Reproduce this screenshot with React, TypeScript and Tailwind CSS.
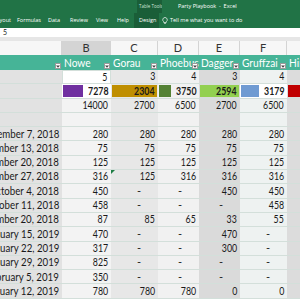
import React from "react";

const colW = ["w-[62px]", "w-[49px]", "w-[47px]", "w-[41px]", "w-[41px]", "w-[47px]", "w-[40px]"];
const colBg = ["bg-[#e2e2e2]", "bg-[#f3f3f3]", "bg-[#e7e7e7]", "bg-[#f1f1f1]", "bg-[#dadada]", "bg-[#eef2f1]", "bg-[#dcdcdc]"];

function N({ children, bold = false, wide = false }: { children: React.ReactNode; bold?: boolean; wide?: boolean }) {
  return (
    <span
      className={
        "inline-block origin-right whitespace-nowrap " + (wide ? "scale-x-[0.88] " : "scale-x-[0.8] ") + (bold ? "font-bold" : "")
      }
    >
      {children}
    </span>
  );
}

function Cell({ i, children, extra = "" }: { i: number; children?: React.ReactNode; extra?: string }) {
  return (
    <div
      className={
        colW[i] +
        " " +
        colBg[i] +
        " shrink-0 h-full flex items-center justify-end overflow-hidden pr-[3px] border-b border-[#d3dfda] " +
        extra
      }
    >
      {children}
    </div>
  );
}

const dates = [
  "September 7, 2018",
  "September 13, 2018",
  "September 20, 2018",
  "September 27, 2018",
  "October 4, 2018",
  "October 11, 2018",
  "November 20, 2018",
  "January 15, 2019",
  "January 22, 2019",
  "January 29, 2019",
  "February 5, 2019",
  "February 12, 2019",
];

const data: string[][] = [
  ["280", "280", "280", "280", "280"],
  ["75", "75", "75", "75", "75"],
  ["125", "125", "125", "125", "125"],
  ["316", "125", "316", "316", "316"],
  ["450", "-", "-", "450", "450"],
  ["458", "-", "-", "-", "458"],
  ["87", "85", "65", "33", "55"],
  ["470", "-", "-", "470", "-"],
  ["317", "-", "-", "300", "-"],
  ["825", "-", "-", "-", "-"],
  ["350", "-", "-", "-", "-"],
  ["780", "780", "780", "0", "0"],
];

function Val({ v }: { v: string }) {
  if (v === "-") return <span className="pr-[14px]">-</span>;
  return <N>{v}</N>;
}

function Row({ children }: { children: React.ReactNode }) {
  return <div className="h-[14.3px] flex shrink-0">{children}</div>;
}

function FilterBtn() {
  return (
    <div className="absolute right-[1px] bottom-[1px] w-[6px] h-[6px] bg-white border border-[#9a9a9a] flex items-center justify-center">
      <svg width="4" height="3" viewBox="0 0 4 3">
        <path d="M0 0.5 L4 0.5 L2 2.8 Z" fill="#444" />
      </svg>
    </div>
  );
}

function HeadCell({ i, label }: { i: number; label: string }) {
  return (
    <div className={colW[i] + " shrink-0 h-full flex items-center overflow-hidden pl-[2px] relative"}>
      <span className="inline-block origin-left scale-x-[0.85] whitespace-nowrap text-[12px] leading-none">{label}</span>
      {i < 6 && <FilterBtn />}
    </div>
  );
}

export default function App() {
  return (
    <div className="w-[300px] h-[300px] overflow-hidden bg-white flex flex-col font-[Lato,sans-serif] text-[11px] text-[#1a1a1a]">
      {/* Ribbon */}
      <div className="h-[28px] shrink-0 bg-[#217346] flex flex-col text-white font-['Open_Sans',sans-serif]">
        <div className="h-[13px] flex items-center">
          <div className="w-[137px] shrink-0" />
          <div className="w-[25px] h-full bg-[#1a5e38] text-[4.5px] text-[#cfe3d6] pl-[2px] flex items-center whitespace-nowrap overflow-hidden">
            Table Tools
          </div>
          <div className="ml-[16px] text-[5.5px] whitespace-nowrap">Party Playbook&nbsp;&nbsp;-&nbsp;&nbsp;Excel</div>
        </div>
        <div className="h-[15px] flex items-center text-[5.5px] whitespace-nowrap">
          <div className="w-[29px] -ml-[12px] shrink-0 text-right pr-[6px]">Layout</div>
          <div className="w-[31px] shrink-0">Formulas</div>
          <div className="w-[22px] shrink-0">Data</div>
          <div className="w-[26px] shrink-0">Review</div>
          <div className="w-[21px] shrink-0">View</div>
          <div className="w-[17px] shrink-0">Help</div>
          <div className="w-[25px] h-full bg-[#1a5e38] pl-[5px] flex items-center shrink-0">Design</div>
          <svg className="ml-[3px] shrink-0" width="6" height="7" viewBox="0 0 6 7">
            <path d="M3 0.5 A2.3 2.3 0 0 1 4.4 4.6 L4.2 5.6 L1.8 5.6 L1.6 4.6 A2.3 2.3 0 0 1 3 0.5 Z" fill="none" stroke="white" strokeWidth="0.7" />
            <path d="M2 6.4 L4 6.4" stroke="white" strokeWidth="0.6" />
          </svg>
          <div className="ml-[2px]">Tell me what you want to do</div>
        </div>
      </div>
      {/* Formula bar */}
      <div className="h-[9px] shrink-0 bg-white flex items-center pl-[3px] text-[7px] leading-none">5</div>
      <div className="h-[4px] shrink-0 bg-[#e6e6e6]" />
      {/* Column headers */}
      <div className="h-[14px] shrink-0 flex bg-[#f7f7f7] text-[11px] text-[#333]">
        {["", "B", "C", "D", "E", "F", ""].map((l, i) => (
          <div
            key={i}
            className={
              colW[i] +
              " shrink-0 h-full flex items-center justify-center border-r border-[#d4d4d4] " +
              (i === 1 ? "bg-[#d4d4d4]" : "")
            }
          >
            {l}
          </div>
        ))}
      </div>
      {/* Table header */}
      <div className="h-[15px] shrink-0 flex bg-[#46b497] text-white">
        {["", "Nowe", "Gorau", "Phoebus", "Dagger", "Gruffzai", "Hin"].map((l, i) => (
          <HeadCell key={i} i={i} label={l} />
        ))}
      </div>
      {/* Row 5 */}
      <Row>
        <Cell i={0} />
        <Cell i={1} extra="!bg-white border border-[#9c9c9c]">
          <N>5</N>
        </Cell>
        <Cell i={2}>
          <N>3</N>
        </Cell>
        <Cell i={3}>
          <N>4</N>
        </Cell>
        <Cell i={4}>
          <N>3</N>
        </Cell>
        <Cell i={5}>
          <N>4</N>
        </Cell>
        <Cell i={6} />
      </Row>
      {/* Bars row */}
      <Row>
        <Cell i={0} />
        <div className={colW[1] + " shrink-0 h-full flex items-stretch py-[1px] pl-[1px] bg-white border-b border-[#d3dfda]"}>
          <div className="w-[24px] bg-[#7030a0]" />
          <div className="flex-1 flex items-center justify-end pr-[2px]">
            <N bold>7278</N>
          </div>
        </div>
        <div className={colW[2] + " shrink-0 h-full flex items-stretch py-[1px] px-[1px] bg-[#e7e7e7] border-b border-[#d3dfda]"}>
          <div className="flex-1 bg-[#bf8f00] flex items-center justify-end pr-[2px]">
            <N bold>2304</N>
          </div>
        </div>
        <div className={colW[3] + " shrink-0 h-full flex items-stretch py-[1px] pl-[1px] bg-[#f1f1f1] border-b border-[#d3dfda]"}>
          <div className="w-[22px] bg-[#548235]" />
          <div className="flex-1 flex items-center justify-end pr-[2px]">
            <N bold>3750</N>
          </div>
        </div>
        <div className={colW[4] + " shrink-0 h-full flex items-stretch py-[1px] px-[1px] bg-[#dadada] border-b border-[#d3dfda]"}>
          <div className="flex-1 bg-[#92d050] flex items-center justify-end pr-[2px]">
            <N bold>2594</N>
          </div>
        </div>
        <div className={colW[5] + " shrink-0 h-full flex items-stretch py-[1px] pl-[1px] bg-white border-b border-[#d3dfda]"}>
          <div className="w-[22px] bg-[#6f9bd2]" />
          <div className="flex-1 flex items-center justify-end pr-[2px]">
            <N bold>3179</N>
          </div>
        </div>
        <div className={colW[6] + " shrink-0 h-full py-[1px] pl-[1px] bg-[#dcdcdc] border-b border-[#d3dfda]"}>
          <div className="h-full bg-[#c00000]" />
        </div>
      </Row>
      {/* Totals */}
      <Row>
        <Cell i={0} />
        {["14000", "2700", "6500", "2700", "6500"].map((v, j) => (
          <Cell key={j} i={j + 1}>
            <N>{v}</N>
          </Cell>
        ))}
        <Cell i={6} />
      </Row>
      <Row>
        {[0, 1, 2, 3, 4, 5, 6].map((i) => (
          <Cell key={i} i={i} />
        ))}
      </Row>
      {dates.map((d, r) => (
        <Row key={d}>
          <Cell i={0}>
            <N wide>{d}</N>
          </Cell>
          {data[r].map((v, j) => (
            <Cell key={j} i={j + 1} extra={r === 3 && j === 1 ? "relative" : ""}>
              {r === 3 && j === 1 && (
                <div className="absolute left-0 top-0 w-0 h-0 border-t-[4px] border-r-[4px] border-t-[#1e7e45] border-r-transparent" />
              )}
              <Val v={v} />
            </Cell>
          ))}
          <Cell i={6} />
        </Row>
      ))}
    </div>
  );
}
